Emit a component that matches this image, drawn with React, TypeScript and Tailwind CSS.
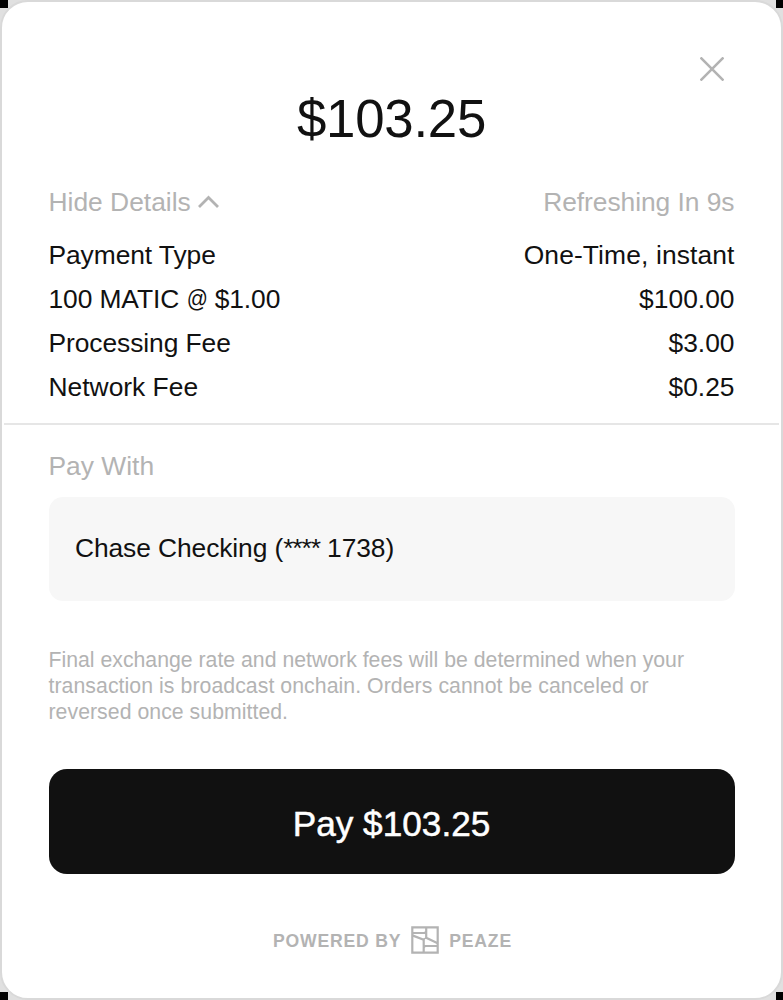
import type { ReactNode } from 'react';

type Detail = { id: string; label: ReactNode; value: string; labelClass: string; valueClass: string };

const details: Detail[] = [
  {
    id: 'type',
    label: 'Payment Type',
    value: 'One-Time, instant',
    labelClass: 'tracking-[-0.08px]',
    valueClass: 'tracking-[0.12px]',
  },
  {
    id: 'amount',
    label: (
      <>
        100 MATIC <span className="-mx-[2.8px] inline-block scale-x-[0.79] scale-y-90">@</span> $1.00
      </>
    ),
    value: '$100.00',
    labelClass: 'tracking-[-0.1px]',
    valueClass: '',
  },
  { id: 'processing', label: 'Processing Fee', value: '$3.00', labelClass: 'tracking-[-0.08px]', valueClass: '' },
  { id: 'network', label: 'Network Fee', value: '$0.25', labelClass: '', valueClass: '' },
];

function PeazeMark() {
  return (
    <svg width="28" height="28" viewBox="0 0 28 28" fill="none" stroke="#b3b3b3" strokeWidth="2.2">
      <path d="M1.3 1.3H26.7V26.7H1.3Z" />
      <path d="M1.3 7H13.8L15.2 5.6V1.3M15.2 5.6V11.8L26.7 17.2" />
      <path d="M1.3 9.4L12.7 13.8V26.7M12.7 21.4L14 20H26.7" />
      <path d="M12.2 13.4L15.2 11.8" strokeWidth="1.4" />
    </svg>
  );
}

export default function App() {
  return (
    <div className="h-[1000px] w-[783px] overflow-hidden bg-[#e0e0e0] font-['Liberation_Sans',Arial,sans-serif] text-[26.4px] text-[#111]">
      <div className="relative h-full w-full">
        <span className="absolute top-0 left-0 size-2 bg-black" />
        <span className="absolute top-0 right-0 h-2 w-[7px] bg-black" />
        <span className="absolute bottom-0 left-0 size-2 bg-black" />
        <span className="absolute right-0 bottom-0 h-2 w-[7px] bg-black" />
        <main className="relative flex h-full w-full flex-col rounded-[28px] border-2 border-[#d9d9d9] bg-white">
          <header className="flex h-[79px] shrink-0 items-end justify-end pr-[57px]">
            <button aria-label="Close" className="block">
              <svg width="24" height="24" viewBox="0 0 24 24" fill="none" stroke="#b3b3b3" strokeWidth="2.6">
                <path d="M0.5 0.5L23.5 23.5M23.5 0.5L0.5 23.5" />
              </svg>
            </button>
          </header>
          <h1 className="mt-[8px] h-[60px] shrink-0 text-center text-[52.8px] leading-[60px] tracking-[-0.25px]">
            $103.25
          </h1>
          <section className="shrink-0 px-[46.5px] pt-[38px]">
            <div className="flex h-[30px] items-center justify-between leading-[30px] text-[#b3b3b3]">
              <button className="flex items-center gap-[7px]">
                <span>Hide Details</span>
                <svg width="22" height="14" viewBox="0 0 22 14" fill="none" stroke="#b3b3b3" strokeWidth="2.8">
                  <path d="M1 12L10.5 2.5L20 12" />
                </svg>
              </button>
              <span className="tracking-[-0.05px]">Refreshing In 9s</span>
            </div>
            <dl className="mt-[16px]">
              {details.map((d) => (
                <div key={d.id} className="flex h-11 items-center justify-between leading-[30px]">
                  <dt className={d.labelClass}>{d.label}</dt>
                  <dd className={d.valueClass}>{d.value}</dd>
                </div>
              ))}
            </dl>
          </section>
          <hr className="mx-[2px] mt-[14px] h-[2px] shrink-0 border-0 bg-[#e6e6e6]" />
          <section className="shrink-0 px-[46.5px] pt-[26px]">
            <h2 className="h-[30px] leading-[30px] text-[#b3b3b3]">Pay With</h2>
            <div className="mt-[15.5px] flex h-[104.5px] items-center rounded-[14px] bg-[#f7f7f7] pl-[26.5px]">
              <span className="tracking-[-0.1px] whitespace-pre">
                Chase Checking (<span className="tracking-[-1.1px]">****</span> 1738)
              </span>
            </div>
            <p className="mt-[45.5px] text-[21.25px] leading-[26.4px] whitespace-nowrap text-[#b3b3b3]">
              Final exchange rate and network fees will be determined when your
              <br />
              <span className="tracking-[0.06px]">transaction is broadcast onchain. Orders cannot be canceled or</span>
              <br />
              <span className="tracking-[0.04px]">reversed once submitted.</span>
            </p>
            <button className="mt-[43px] block h-[105.5px] w-full rounded-[18px] bg-[#111] pt-[5px] text-[35.2px] text-white [-webkit-text-stroke:0.5px_white]">
              Pay $103.25
            </button>
          </section>
          <footer className="mt-[52px] flex h-7 shrink-0 items-center justify-center gap-[10px] pl-[2px] text-[17.6px] font-bold tracking-[0.8px] text-[#b3b3b3]">
            <span className="pt-[2px]">POWERED BY</span>
            <PeazeMark />
            <span className="pt-[2px]">PEAZE</span>
          </footer>
        </main>
      </div>
    </div>
  );
}
